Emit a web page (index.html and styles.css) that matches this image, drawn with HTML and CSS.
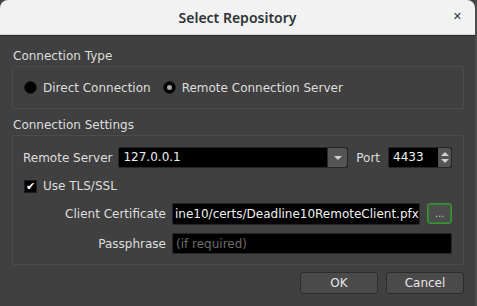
FILE: index.html
```html
<!DOCTYPE html>
<html lang="en">
<head>
    <meta charset="UTF-8">
    <title>Select Repository</title>
    <link rel="stylesheet" href="styles.css">
</head>
<body>
    <div class="window">
        <div class="titlebar">
            <span class="title">Select Repository</span>
            <span class="close">&#x2715;</span>
        </div>
        <div class="content">
            <div class="group-title">Connection Type</div>
            <div class="group-box radio-row">
                <label class="radio"><span class="radio-dot"></span>Direct Connection</label>
                <label class="radio"><span class="radio-dot checked"></span>Remote Connection Server</label>
            </div>

            <div class="group-title second">Connection Settings</div>
            <div class="group-box settings">
                <div class="server-row">
                    <span class="lbl">Remote Server</span>
                    <div class="combo">
                        <span class="combo-text">127.0.0.1</span>
                        <span class="combo-btn"><span class="arrow-down"></span></span>
                    </div>
                    <span class="lbl port-lbl">Port</span>
                    <div class="spin">
                        <span class="spin-text">4433</span>
                        <span class="spin-btns">
                            <span class="arrow-up"></span>
                            <span class="arrow-down small"></span>
                        </span>
                    </div>
                </div>
                <label class="check-row"><span class="checkbox">&#10004;</span>Use TLS/SSL</label>
                <div class="form-grid">
                    <span class="lbl right">Client Certificate</span>
                    <div class="cert-line">
                        <div class="field">ine10/certs/Deadline10RemoteClient.pfx</div>
                        <button class="browse">...</button>
                    </div>
                    <span class="lbl right">Passphrase</span>
                    <div class="field placeholder">(if required)</div>
                </div>
            </div>

            <div class="buttons">
                <button class="btn">OK</button>
                <button class="btn">Cancel</button>
            </div>
        </div>
    </div>
</body>
</html>
```

FILE: styles.css
```css
body {
    margin: 0;
    background: #3c3c3c;
    font-family: "DejaVu Sans", sans-serif;
    font-size: 12px;
    color: #dedede;
}
.window {
    width: 477px;
    height: 306px;
    background: #404040;
    border-right: 2px solid #4b4b4b;
    box-sizing: border-box;
    overflow: hidden;
}
.titlebar {
    height: 34px;
    background: #f2f2f2;
    border-bottom: 1px solid #d4d4d4;
    border-radius: 8px 8px 0 0;
    display: flex;
    align-items: center;
    justify-content: center;
    position: relative;
    box-shadow: 0 1px 0 #2e2e2e;
}
.title {
    font-family: "Noto Sans", sans-serif;
    font-weight: 600;
    font-size: 14px;
    color: #2e3436;
}
.close {
    position: absolute;
    right: 13px;
    top: 10px;
    font-size: 11px;
    font-weight: bold;
    color: #2e3436;
}
.content {
    padding: 14px 11px 0 12px;
}
.group-title {
    padding-left: 1px;
    line-height: 14px;
    margin-bottom: 3px;
}
.group-title.second {
    margin-top: 9px;
}
.group-box {
    border: 1px solid #4c4c4c;
    border-radius: 2px;
}
.radio-row {
    height: 41px;
    display: flex;
    align-items: center;
    padding-left: 11px;
    gap: 12px;
}
.radio {
    display: flex;
    align-items: center;
    gap: 6px;
}
.radio-dot {
    width: 11px;
    height: 11px;
    border-radius: 50%;
    background: #000;
    border: 1px solid #1c1c1c;
    display: flex;
    align-items: center;
    justify-content: center;
}
.radio-dot.checked::after {
    content: "";
    width: 5px;
    height: 5px;
    border-radius: 50%;
    background: #a8a8a8;
}
.settings {
    height: 117px;
    padding: 11px 11px 0 10px;
}
.server-row {
    display: flex;
    align-items: center;
    height: 21px;
}
.lbl {
    white-space: nowrap;
}
.combo {
    margin-left: 6px;
    width: 230px;
    height: 21px;
    display: flex;
    background: #000;
    border: 1px solid #262626;
    border-radius: 2px;
    box-sizing: border-box;
}
.combo-text {
    flex: 1;
    padding-left: 4px;
    line-height: 19px;
    color: #f0f0f0;
}
.combo-btn {
    width: 19px;
    background: #545454;
    border-left: 1px solid #2a2a2a;
    border-radius: 0 2px 2px 0;
    display: flex;
    align-items: center;
    justify-content: center;
}
.arrow-down {
    width: 0;
    height: 0;
    border-left: 4px solid transparent;
    border-right: 4px solid transparent;
    border-top: 4px solid #d0d0d0;
}
.arrow-up {
    width: 0;
    height: 0;
    border-left: 4px solid transparent;
    border-right: 4px solid transparent;
    border-bottom: 4px solid #d0d0d0;
}
.port-lbl {
    margin-left: 8px;
}
.spin {
    margin-left: 8px;
    width: 64px;
    height: 21px;
    display: flex;
    background: #000;
    border: 1px solid #262626;
    border-radius: 2px;
    box-sizing: border-box;
}
.spin-text {
    flex: 1;
    padding-left: 4px;
    line-height: 19px;
    color: #f0f0f0;
}
.spin-btns {
    width: 13px;
    background: #545454;
    border-radius: 0 2px 2px 0;
    display: flex;
    flex-direction: column;
    align-items: center;
    justify-content: center;
    gap: 3px;
}
.check-row {
    display: flex;
    align-items: center;
    gap: 6px;
    margin-top: 11px;
    margin-left: 1px;
    height: 14px;
}
.checkbox {
    width: 13px;
    height: 13px;
    background: #000;
    border: 1px solid #1c1c1c;
    box-sizing: border-box;
    color: #fff;
    font-size: 11px;
    line-height: 11px;
    text-align: center;
}
.form-grid {
    display: grid;
    grid-template-columns: 143px 1fr;
    column-gap: 6px;
    row-gap: 8px;
    align-items: center;
    margin-top: 10px;
}
.right {
    text-align: right;
}
.cert-line {
    display: flex;
    gap: 7px;
}
.field {
    flex: 1;
    height: 22px;
    line-height: 20px;
    background: #000;
    border: 1px solid #262626;
    border-radius: 2px;
    box-sizing: border-box;
    padding-left: 2px;
    color: #f0f0f0;
    white-space: nowrap;
    overflow: hidden;
}
.field.placeholder {
    color: #6c6c6c;
    padding-left: 3px;
    height: 21px;
}
.browse {
    width: 25px;
    height: 21px;
    background: #4c4c4c;
    border: 1px solid #2f9a2f;
    box-shadow: inset 0 0 0 1px #3c7a3c;
    border-radius: 3px;
    color: #cfcfcf;
    font-family: "DejaVu Sans", sans-serif;
    font-size: 10px;
    padding: 0;
}
.buttons {
    display: flex;
    justify-content: flex-end;
    gap: 8px;
    margin-top: 7px;
}
.btn {
    width: 78px;
    height: 22px;
    background: #4a4a4a;
    border: 1px solid #2c2c2c;
    border-radius: 3px;
    color: #e6e6e6;
    font-family: "DejaVu Sans", sans-serif;
    font-size: 12px;
    padding: 0;
}
```
